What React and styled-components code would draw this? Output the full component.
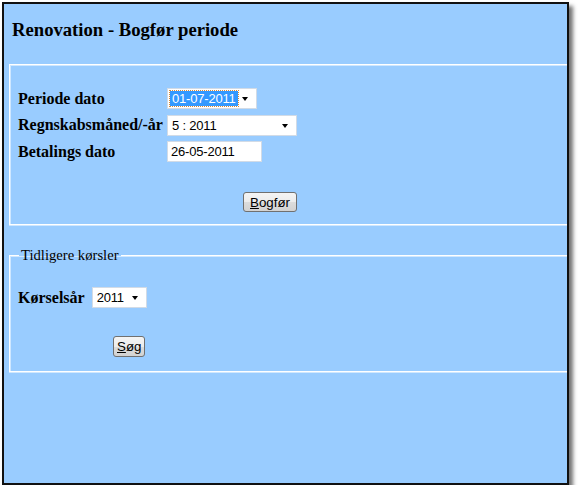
import React from "react";
import styled, { createGlobalStyle } from "styled-components";

const Global = createGlobalStyle`
  html, body {
    margin: 0;
    padding: 0;
    background: #ffffff;
  }
`;

const Frame = styled.div`
  margin: 2px 0 0 2px;
  width: 563px;
  height: 479px;
  border: 2px solid #111;
  background: #99ccff;
  box-shadow: 4px 4px 4px rgba(0, 0, 0, 0.55);
  overflow: hidden;
  font-family: "Liberation Serif", "Times New Roman", serif;
  color: #000;
`;

const Title = styled.h1`
  margin: 0;
  padding: 15px 0 0 8px;
  font-size: 18.67px;
  line-height: 22px;
  font-weight: bold;
`;

const Box = styled.fieldset`
  margin: ${p => p.$top}px -30px 0 5px;
  padding: ${p => p.$pad};
  border: 1px solid #fff;
  box-shadow: inset 1px 1px 0 #cfe7ff, 0 1px 0 #cfe7ff;
  min-width: 0;
`;

const Legend = styled.legend`
  margin-left: 1px;
  padding: 0 2px;
  font-size: 14.67px;
  line-height: 17px;
`;

const Form = styled.div`
  display: grid;
  grid-template-columns: 149px auto;
  row-gap: 5.5px;
  align-items: center;
`;

const Label = styled.label`
  font-size: 16px;
  font-weight: bold;
  white-space: nowrap;
`;

const InlineRow = styled.div`
  display: flex;
  align-items: center;
  gap: 7px;
`;

const SelectBox = styled.div`
  position: relative;
  box-sizing: border-box;
  width: ${p => p.$w}px;
  height: 21px;
  background: #fff;
  border: 1px solid #d2dbe6;
  display: flex;
  align-items: center;
  padding-left: 2px;
  font-family: "Liberation Sans", Arial, sans-serif;
  font-size: 13px;
  letter-spacing: -0.2px;
  &::after {
    content: "";
    position: absolute;
    right: 8px;
    top: 8px;
    border-left: 3.5px solid transparent;
    border-right: 3.5px solid transparent;
    border-top: 4px solid #000;
  }
`;

const Value = styled.span`
  padding: 0 2px;
  line-height: 15px;
  ${p => p.$active && `
    background: #3399ff;
    color: #fff;
    outline: 1px dotted #d58a3a;
  `}
`;

const TextInput = styled.input`
  box-sizing: border-box;
  width: ${p => p.$w}px;
  height: 21px;
  margin: 0;
  padding: 0 3px;
  background: #fff;
  border: 1px solid #d2dbe6;
  font-family: "Liberation Sans", Arial, sans-serif;
  font-size: 13px;
  letter-spacing: -0.2px;
  color: #000;
  outline: none;
`;

const ButtonRow = styled.div`
  margin-top: ${p => p.$top}px;
  padding-left: ${p => p.$left}px;
`;

const Button = styled.button`
  box-sizing: border-box;
  height: ${p => p.$h}px;
  padding: 0 ${p => p.$px}px;
  border: 1px solid #707070;
  border-radius: 3px;
  background: linear-gradient(#f4f4f4 0%, #ececec 50%, #dcdcdc 51%, #d2d2d2 100%);
  font-family: "Liberation Sans", Arial, sans-serif;
  font-size: 13.33px;
  color: #000;
  u { text-decoration: underline; }
`;

export default function App() {
  return (
    <>
      <Global />
      <Frame>
        <Title>Renovation - Bogfør periode</Title>

        <Box $top={23} $pad="23px 7px 12px 8px">
          <Form>
            <Label>Periode dato</Label>
            <SelectBox $w={90}><Value $active>01-07-2011</Value></SelectBox>
            <Label>Regnskabsmåned/-år</Label>
            <SelectBox $w={130}><Value>5 : 2011</Value></SelectBox>
            <Label>Betalings dato</Label>
            <TextInput $w={95} defaultValue="26-05-2011" />
          </Form>
          <ButtonRow $top={30} $left={225}>
            <Button $h={20} $px={6}><u>B</u>ogfør</Button>
          </ButtonRow>
        </Box>

        <Box $top={22} $pad="23px 7px 14px 8px">
          <Legend>Tidligere kørsler</Legend>
          <InlineRow>
            <Label>Kørselsår</Label>
            <SelectBox $w={55}><Value>2011</Value></SelectBox>
          </InlineRow>
          <ButtonRow $top={28} $left={95}>
            <Button $h={21} $px={3}><u>S</u>øg</Button>
          </ButtonRow>
        </Box>
      </Frame>
    </>
  );
}
